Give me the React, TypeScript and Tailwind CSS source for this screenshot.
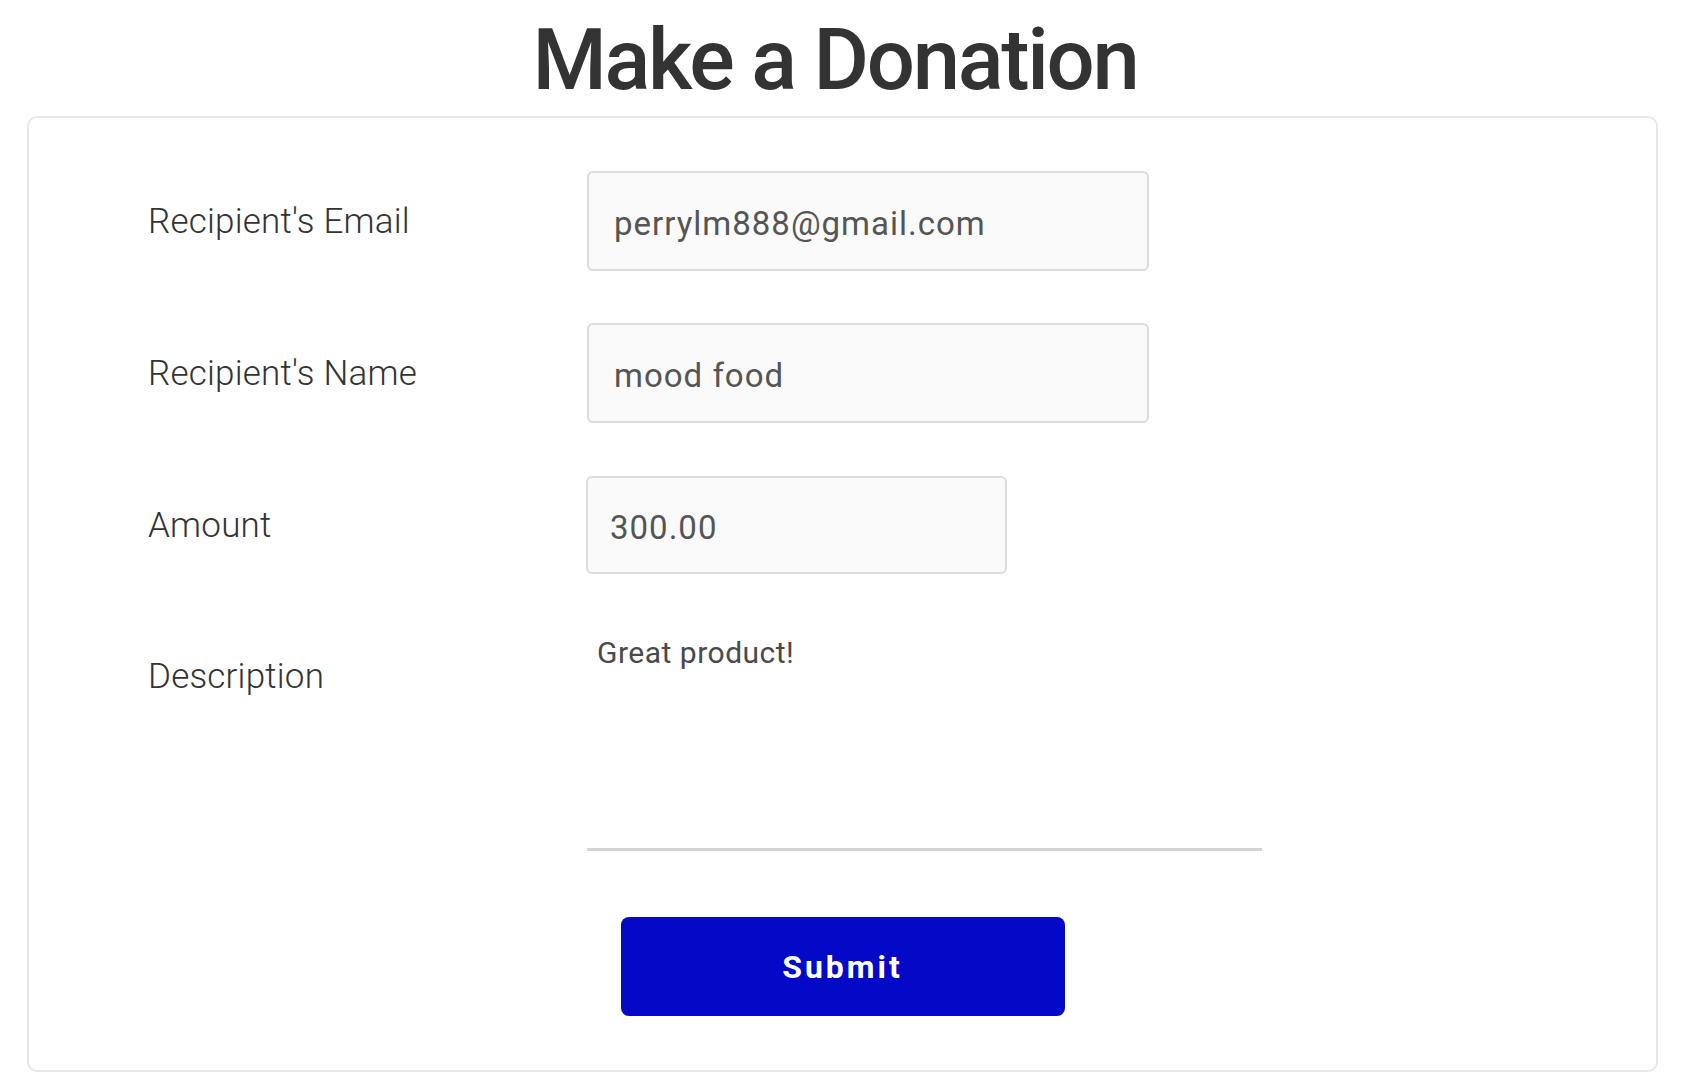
import React from "react";

export default function App() {
  return (
    <div className="min-h-screen bg-white font-['Roboto',sans-serif]">
      <h1 className="mt-[18px] text-center text-[85px] font-medium leading-none tracking-[-2.3px] text-[#333333] pr-[22px]">
        Make a Donation
      </h1>
      <div className="ml-[27px] mt-[13px] w-[1631px] rounded-[10px] border-2 border-[#e8e8e8] pt-[53px] pb-[54px]">
        <div className="flex items-center">
          <label className="w-[558px] pl-[119px] text-[35px] font-light leading-none tracking-[0.2px] text-[#333333]">
            Recipient's Email
          </label>
          <input
            defaultValue="perrylm888@gmail.com"
            className="h-[100px] w-[562px] rounded-[6px] border-2 border-[#dcdcdc] bg-[#fafafa] px-[25px] pt-[5px] text-[33px] tracking-[1px] text-[#555555] outline-none"
          />
        </div>
        <div className="mt-[52px] flex items-center">
          <label className="w-[558px] pl-[119px] text-[35px] font-light leading-none tracking-[0.2px] text-[#333333]">
            Recipient's Name
          </label>
          <input
            defaultValue="mood food"
            className="h-[100px] w-[562px] rounded-[6px] border-2 border-[#dcdcdc] bg-[#fafafa] px-[25px] pt-[5px] text-[33px] tracking-[1px] text-[#555555] outline-none"
          />
        </div>
        <div className="mt-[53px] flex items-center">
          <label className="w-[557px] pl-[119px] text-[35px] font-light leading-none tracking-[0.2px] text-[#333333]">
            Amount
          </label>
          <input
            defaultValue="300.00"
            className="h-[98px] w-[421px] rounded-[6px] border-2 border-[#dcdcdc] bg-[#fafafa] px-[22px] pt-[4px] text-[33px] tracking-[1px] text-[#555555] outline-none"
          />
        </div>
        <div className="mt-[50px] flex items-start">
          <label className="mt-[35px] w-[558px] pl-[119px] text-[35px] font-light leading-none tracking-[0.2px] text-[#333333]">
            Description
          </label>
          <textarea
            defaultValue="Great product!"
            className="h-[227px] w-[675px] resize-none border-0 border-b-[3px] border-[#d3d3d3] bg-white px-[10px] pt-[6px] text-[30px] tracking-[0.5px] text-[#4a4a4a] outline-none"
          />
        </div>
        <div className="mt-[66px] flex justify-center">
          <button className="h-[99px] w-[444px] rounded-[8px] bg-[#0408c7] text-[32px] font-bold tracking-[3px] text-white">
            Submit
          </button>
        </div>
      </div>
    </div>
  );
}
